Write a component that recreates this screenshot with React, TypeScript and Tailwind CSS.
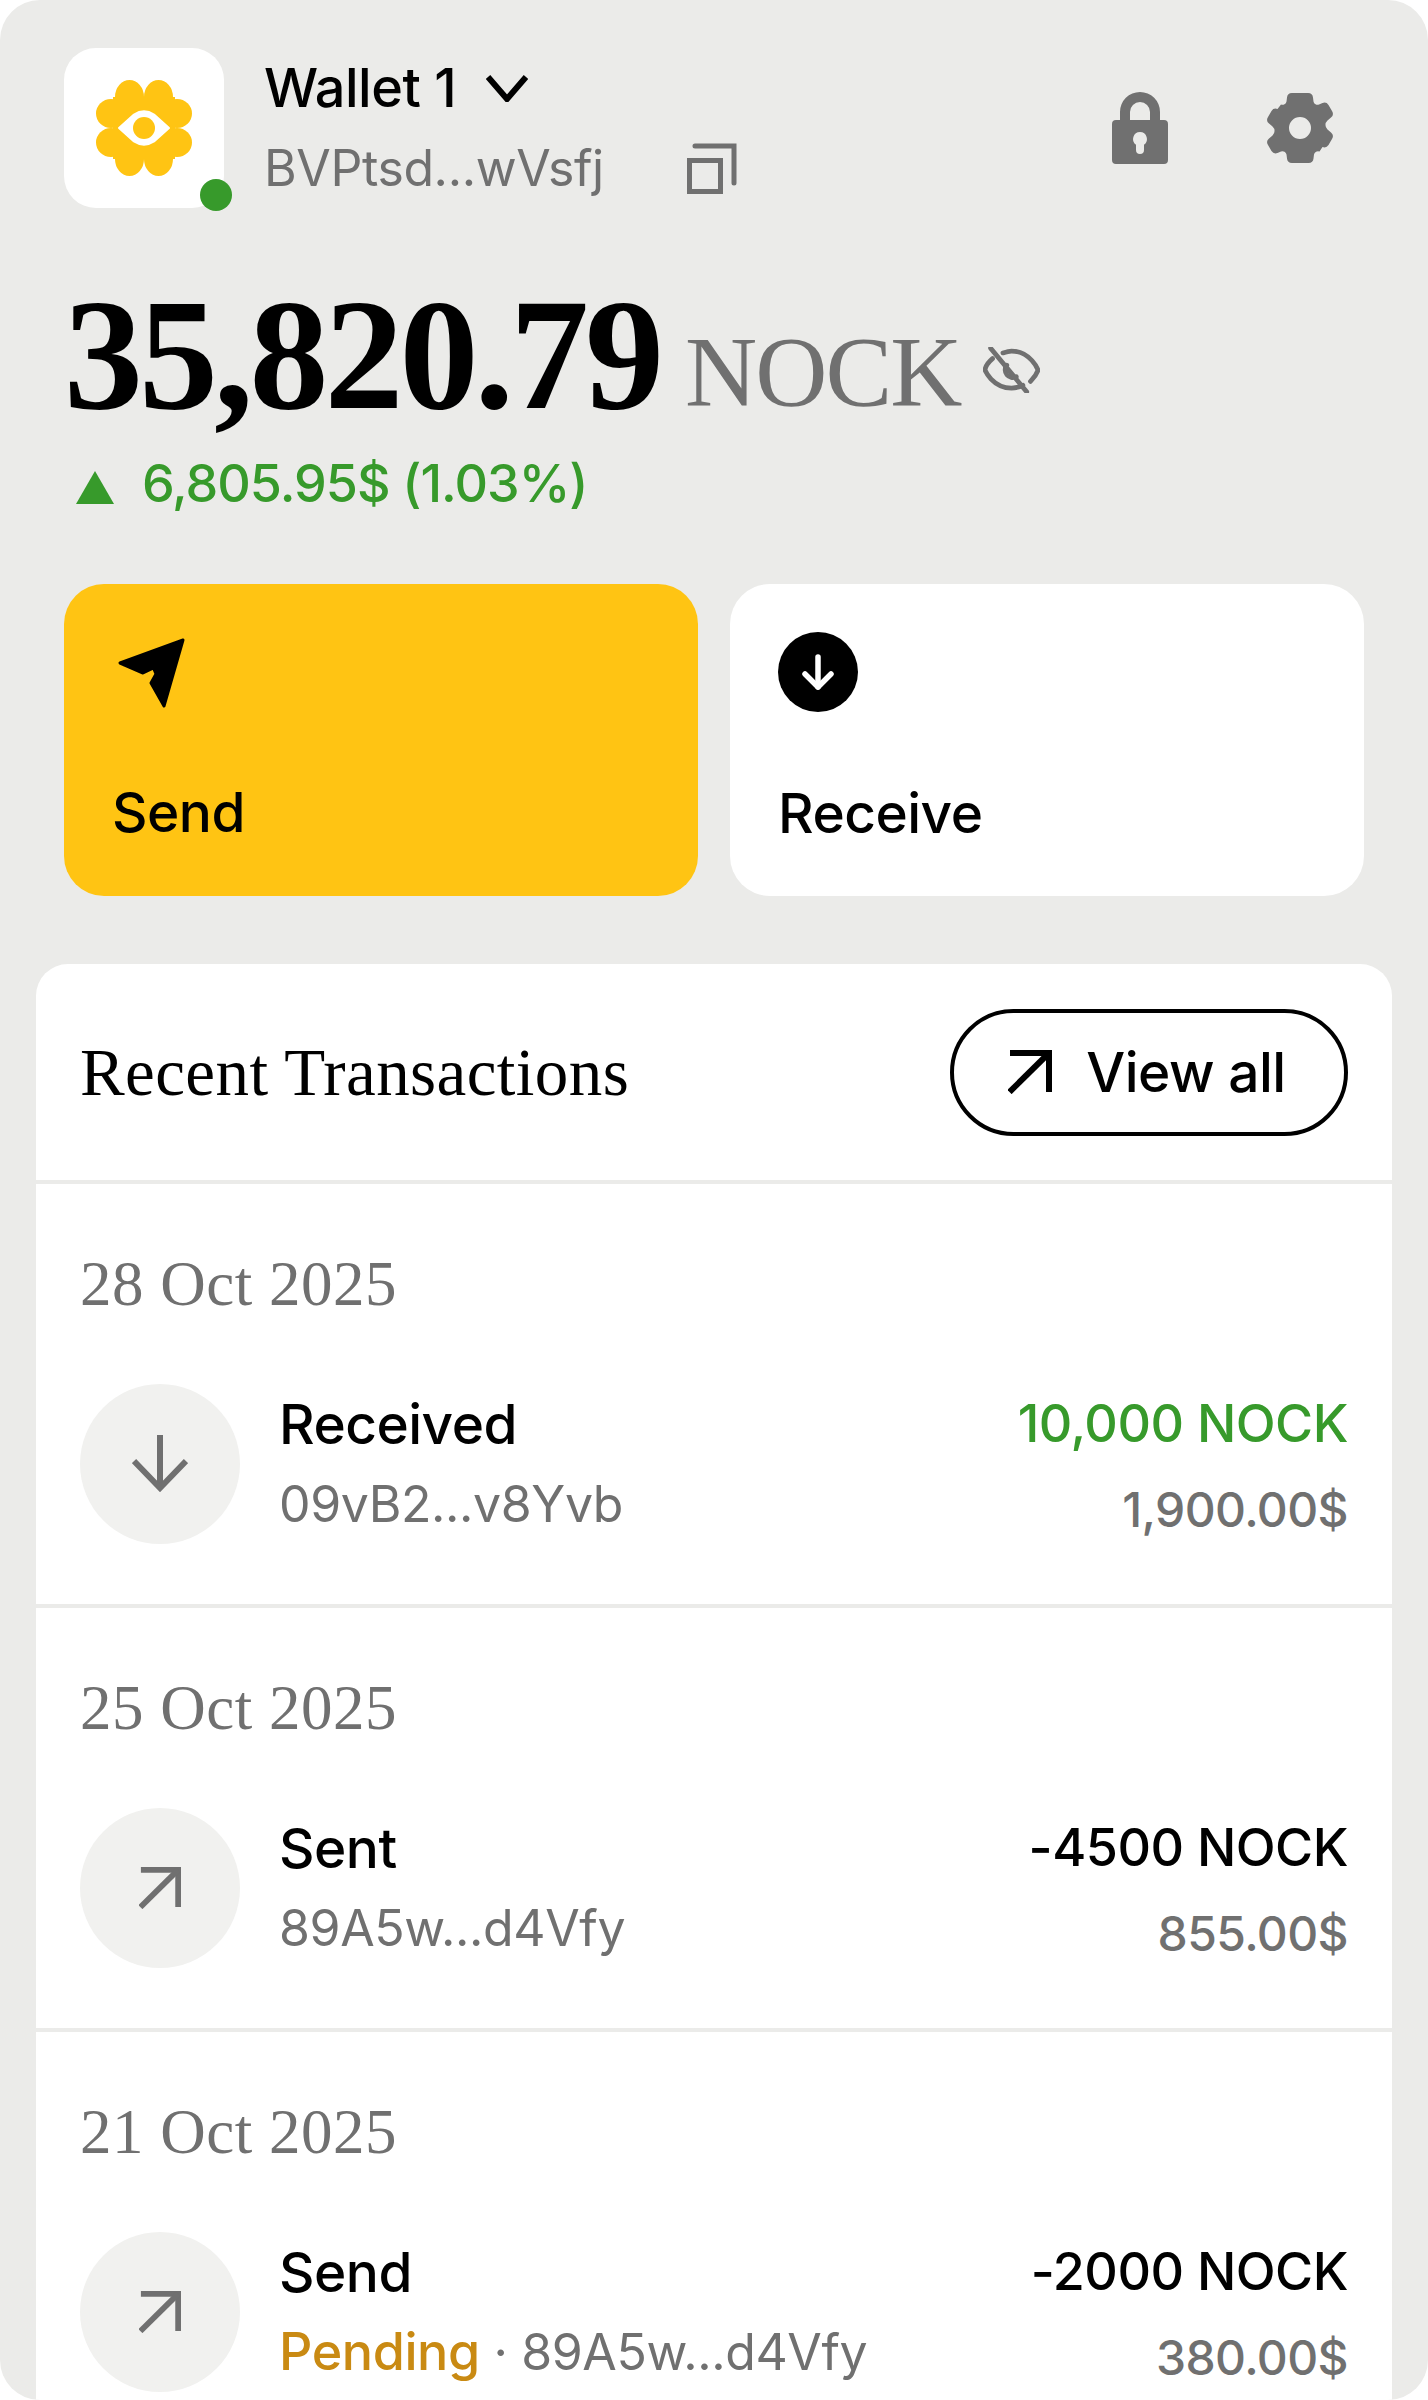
const sans = "font-['Inter','Liberation_Sans',sans-serif]";
const serif = "font-['Liberation_Serif',serif]";

type Tx = {
  date: string;
  title: string;
  direction: "in" | "out";
  address: string;
  pending?: boolean;
  amount: string;
  usd: string;
  amountClass?: string;
};

const transactions: Tx[] = [
  { date: "28 Oct 2025", title: "Received", direction: "in", address: "09vB2...v8Yvb", amount: "10,000 NOCK", usd: "1,900.00$", amountClass: "text-[#379A2B]" },
  { date: "25 Oct 2025", title: "Sent", direction: "out", address: "89A5w...d4Vfy", amount: "-4500 NOCK", usd: "855.00$" },
  { date: "21 Oct 2025", title: "Send", direction: "out", address: "89A5w...d4Vfy", pending: true, amount: "-2000 NOCK", usd: "380.00$" },
];

function Logo() {
  return (
    <svg width="96" height="96" viewBox="0 0 96 96" fill="#FFC413">
      <ellipse cx="33.5" cy="17" rx="14.5" ry="17" />
      <ellipse cx="62.5" cy="17" rx="14.5" ry="17" />
      <ellipse cx="33.5" cy="79" rx="14.5" ry="17" />
      <ellipse cx="62.5" cy="79" rx="14.5" ry="17" />
      <ellipse cx="15" cy="33.5" rx="15" ry="14.5" />
      <ellipse cx="15" cy="62.5" rx="15" ry="14.5" />
      <ellipse cx="81" cy="33.5" rx="15" ry="14.5" />
      <ellipse cx="81" cy="62.5" rx="15" ry="14.5" />
      <rect x="17" y="17" width="62" height="62" />
      <path d="M23 48 L38 34.5 Q48 28 58 34.5 L73 48 L58 61.5 Q48 68 38 61.5 Z" fill="#fff" stroke="#fff" strokeWidth="2" strokeLinejoin="round" />
      <circle cx="48" cy="48" r="11" />
    </svg>
  );
}

function CopyIcon() {
  return (
    <svg width="52" height="52" viewBox="0 0 52 52" fill="none" stroke="#707070" strokeWidth="5">
      <rect x="3.5" y="18.5" width="31" height="31" />
      <path d="M9 4h39v37" strokeLinecap="round" />
    </svg>
  );
}

function LockIcon() {
  return (
    <svg width="56" height="72" viewBox="0 0 56 72" fill="#707070">
      <path d="M8 30V20a20 20 0 0 1 40 0v10H38V20a10 10 0 0 0-20 0v10Z" />
      <path
        fillRule="evenodd"
        d="M4 28h48a4 4 0 0 1 4 4v36a4 4 0 0 1-4 4H4a4 4 0 0 1-4-4V32a4 4 0 0 1 4-4Zm24 12a7 7 0 0 0-4 12.7V58a4 4 0 0 0 8 0v-5.3A7 7 0 0 0 28 40Z"
      />
    </svg>
  );
}

function GearIcon() {
  return (
    <svg width="66" height="70" viewBox="0 0 66 70" fill="#707070">
      <path
        fillRule="evenodd"
        d="M25 0h16a5 5 0 0 1 5 4.500l.5 4a4 4 0 0 0 5.500 3l3.500-1.500a5 5 0 0 1 6 2l3.500 6a5 5 0 0 1-1 6.500l-3.500 3a6 6 0 0 0 0 9l3.500 3a5 5 0 0 1 1 6.500l-3.500 6a5 5 0 0 1-6 2L52.500 58.500a4 4 0 0 0-5.500 3l-.5 4a5 5 0 0 1-5 4.500H25a5 5 0 0 1-5-4.500l-.5-4a4 4 0 0 0-5.500-3L10.500 60a5 5 0 0 1-6-2L1 52a5 5 0 0 1 1-6.500l3.500-3a6 6 0 0 0 0-9L2 30.500A5 5 0 0 1 1 24l3.500-6a5 5 0 0 1 6-2L14 11.500a4 4 0 0 0 5.500-3l.5-4A5 5 0 0 1 25 0Zm8 24a11 11 0 1 0 0 22 11 11 0 0 0 0-22Z"
      />
    </svg>
  );
}

function EyeOffIcon() {
  return (
    <svg width="57" height="46" viewBox="0 0 60 48" fill="none" stroke="#707070" strokeWidth="5" strokeLinecap="round">
      <path d="M10 12C3 18 2 24 2 24s8 19 28 19c5 0 9-1 12-3" />
      <path d="M21 6c3-1 6-2 9-2 20 0 28 20 28 20s-2 6-8 12" />
      <path d="M25 19a8 8 0 0 0 10 12" />
      <path d="M8 1l38 46" />
    </svg>
  );
}

function SendIcon() {
  return (
    <svg width="68" height="72" viewBox="0 0 68 72">
      <path d="M65 3 2 26 25 36 35.500 31 38 37 33 46 46 69Z" fill="#000" stroke="#000" strokeWidth="3" strokeLinejoin="round" />
    </svg>
  );
}

function ArrowUpRight({ size, color, width }: { size: number; color: string; width: number }) {
  return (
    <svg width={size} height={size} viewBox="0 0 44 44" fill="none" stroke={color} strokeWidth={width}>
      <path d="M2 3h39v39" />
      <path d="M41 3 1.500 42" />
    </svg>
  );
}

function ArrowDown() {
  return (
    <svg width="56" height="58" viewBox="0 0 56 58" fill="none" stroke="#707070" strokeWidth="6">
      <path d="M28 0v52" />
      <path d="M2 26l26 27 26-27" />
    </svg>
  );
}

function TxRow({ tx }: { tx: Tx }) {
  return (
    <div className="h-[424px] border-b-4 border-[#EBEBE9] px-11 pt-[65px]">
      <p className={`${serif} text-[63px] leading-[70px] tracking-[0.5px] text-[#707070]`}>{tx.date}</p>
      <div className="mt-[65px] flex items-center">
        <div className="flex h-40 w-40 shrink-0 items-center justify-center rounded-full bg-[#F1F1EF]">
          {tx.direction === "in" ? <ArrowDown /> : <ArrowUpRight size={42} color="#707070" width={6} />}
        </div>
        <div className={`${sans} ml-[39px] flex-1`}>
          <p className="text-[55px] font-medium leading-[64px] tracking-[-0.5px] text-black">{tx.title}</p>
          <p className="mt-4 text-[50px] leading-[64px] tracking-[-0.4px] text-[#707070]">
            {tx.pending && <span className="text-[52px] font-medium text-[#C98A13]">Pending</span>}
            {tx.pending && " · "}
            {tx.address}
          </p>
        </div>
        <div className={`${sans} pt-[6px] text-right`}>
          <p className={`text-[52px] font-medium leading-[64px] tracking-[-0.5px] ${tx.amountClass ?? "text-black"}`}>{tx.amount}</p>
          <p className="mt-[22px] text-[48px] font-medium leading-[64px] tracking-[-0.6px] text-[#707070]">{tx.usd}</p>
        </div>
      </div>
    </div>
  );
}

export default function App() {
  return (
    <div className="h-[2400px] w-[1428px] overflow-hidden rounded-[40px] bg-[#EBEBE9]">
      <header className="flex items-start justify-between px-16 pt-12">
        <div className="flex">
          <div className="relative flex h-40 w-40 items-center justify-center rounded-[32px] bg-white">
            <Logo />
            <span className="absolute left-[136px] top-[131px] h-8 w-8 rounded-full bg-[#379A2B]" />
          </div>
          <div className={`${sans} ml-10`}>
            <div className="flex items-center pt-[8px]">
              <span className="text-[54px] font-medium leading-[64px] tracking-[-0.5px] text-black">Wallet 1</span>
              <svg className="ml-[30px]" width="42" height="28" viewBox="0 0 42 28" fill="none" stroke="#000" strokeWidth="6">
                <path d="M2 3l19 22L40 3" />
              </svg>
            </div>
            <div className="mt-4 flex items-center">
              <span className="w-[340px] text-[50px] leading-[64px] tracking-[-0.4px] text-[#707070]">BVPtsd...wVsfj</span>
              <span className="ml-[82px]"><CopyIcon /></span>
            </div>
          </div>
        </div>
        <div className="flex items-center gap-[99px] pr-[31px] pt-[44px]">
          <LockIcon />
          <GearIcon />
        </div>
      </header>

      <section className="px-16 pt-[64px]">
        <div className="flex h-[176px] items-start">
          <span className={`${serif} text-[158px] font-bold leading-[166px] tracking-[-4px] text-black`}>35,820.79</span>
          <span className={`${serif} ml-[25px] mt-[45px] text-[100px] leading-[110px] tracking-[-2px] text-[#707070]`}>NOCK</span>
          <span className="ml-[23px] mt-[75px]"><EyeOffIcon /></span>
        </div>
        <div className="mt-1 flex items-center">
          <span className="ml-3 mt-[6px] h-0 w-0 border-x-[19px] border-b-[33px] border-x-transparent border-b-[#379A2B]" />
          <span className={`${sans} ml-7 text-[52px] font-medium leading-[64px] tracking-[-1px] text-[#379A2B]`}>6,805.95$ (1.03%)</span>
        </div>
      </section>

      <section className="mt-[68px] flex gap-8 px-16">
        <button className="flex h-[312px] flex-1 flex-col items-start rounded-[40px] bg-[#FFC413] pl-[48px]">
          <span className="mt-[53px] ml-[6px]"><SendIcon /></span>
          <span className={`${sans} mt-[71px] text-[55px] font-medium leading-[64px] tracking-[-0.5px] text-black`}>Send</span>
        </button>
        <button className="flex h-[312px] flex-1 flex-col items-start rounded-[40px] bg-white pl-[48px]">
          <span className="mt-[48px] flex h-20 w-20 items-center justify-center rounded-full bg-black">
            <svg width="36" height="36" viewBox="0 0 36 36" fill="none" stroke="#fff" strokeWidth="5.500" strokeLinecap="round" strokeLinejoin="round">
              <path d="M18 3v30" />
              <path d="M5 20l13 13 13-13" />
            </svg>
          </span>
          <span className={`${sans} mt-[69px] text-[55px] font-medium leading-[64px] tracking-[-0.5px] text-black`}>Receive</span>
        </button>
      </section>

      <section className="mx-9 mt-[68px] h-[1500px] rounded-[32px] bg-white">
        <div className="flex h-[220px] items-center justify-between border-b-4 border-[#EBEBE9] px-11">
          <h2 className={`${serif} text-[67px] leading-[70px] tracking-[0.4px] text-black`}>Recent Transactions</h2>
          <button className={`${sans} flex h-[127px] w-[398px] items-center justify-center gap-[34px] rounded-full border-4 border-black pr-1 text-[55px] font-medium tracking-[-0.5px] text-black`}>
            <ArrowUpRight size={44} color="#000" width={6} />
            View all
          </button>
        </div>
        {transactions.map((tx) => (
          <TxRow key={tx.date} tx={tx} />
        ))}
      </section>
    </div>
  );
}
